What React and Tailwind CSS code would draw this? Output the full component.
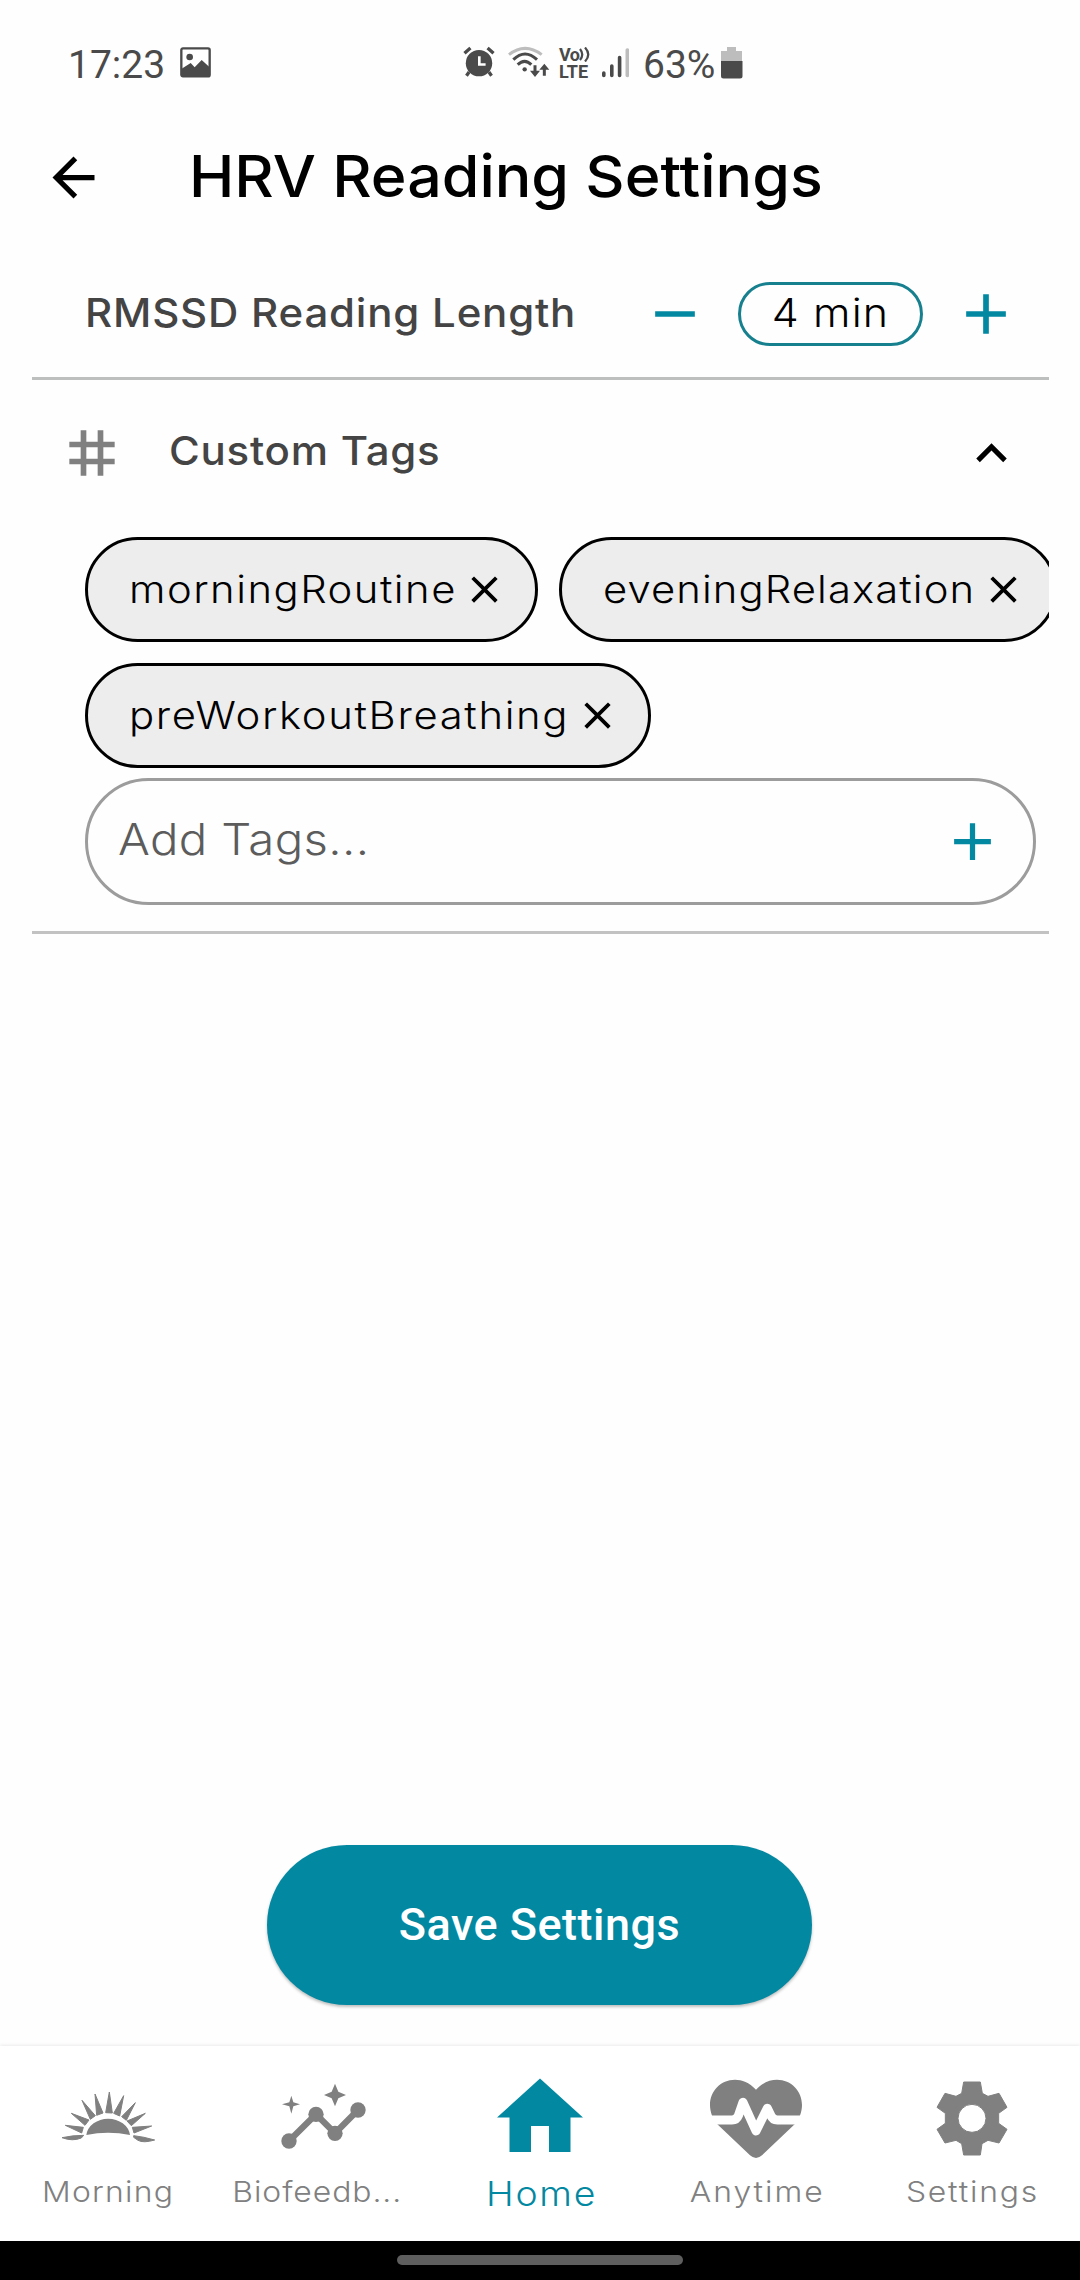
import {
  MdAdd,
  MdArrowBack,
  MdClose,
  MdExpandLess,
  MdRemove,
  MdTag,
} from "react-icons/md";

function StatusBar() {
  return (
    <div className="flex h-[128px] shrink-0 items-start pt-[46px] font-['Roboto',sans-serif] text-[39px] leading-[37px] text-[#4a4a4a]">
      <span className="mt-px ml-[68px] w-[112px]">17:23</span>
      <svg className="mt-px h-[31px] w-[31px]" viewBox="0 0 93 93">
        <rect x="4" y="4" width="85" height="84" rx="5" fill="none" stroke="currentColor" strokeWidth="7" />
        <circle cx="29" cy="30" r="10" fill="currentColor" />
        <path d="M5 65 32 48 44 61 65 39 89 61V88H5Z" fill="currentColor" />
      </svg>

      <svg className="ml-[252px] h-[33px] w-[32px]" viewBox="24 31 96 100">
        <circle cx="72" cy="83" r="40" fill="currentColor" />
        <path d="M28 53 46 37M98 37 116 53M42 110 34 121M102 110 110 121" stroke="currentColor" strokeWidth="10" fill="none" />
        <path d="M73 62V87H92" stroke="#fff" strokeWidth="8" fill="none" />
      </svg>
      <svg className="ml-[13px] h-[34px] w-[42px]" viewBox="159 30 126 102" fill="none" strokeWidth="9">
        <path d="M162 56Q210 18 260 56" stroke="#bdbdbd" />
        <path d="M175 71Q210 37 246 71M188 86Q209 66 229 86" stroke="currentColor" />
        <circle cx="209" cy="100" r="6.5" fill="currentColor" />
        <path d="M240 88V113M268 119V93" stroke="currentColor" />
        <path d="M225 104H255L240 123ZM253 101H283L268 83Z" fill="currentColor" />
      </svg>
      <span className="ml-[9px] flex w-[43px] flex-col text-[18px] leading-[17px] font-bold">
        <span className="flex items-start">
          <span className="w-[20px] tracking-[-0.5px]">Vo</span>
          <svg className="mt-px h-[15px] w-[12px]" viewBox="0 0 12 15" fill="none" stroke="currentColor" strokeWidth="2.2">
            <path d="M1 2Q5.5 7.500 1 13M6 0.500Q12.500 7.500 6 14.500" />
          </svg>
        </span>
        <span>LTE</span>
      </span>
      <svg className="mt-[2px] h-[30px] w-[27px]" viewBox="0 0 27 30" strokeWidth="3.6" strokeLinecap="round">
        <path d="M1.800 25V27.500M9.800 18V27.500M17.600 9.500V27.500" stroke="currentColor" />
        <path d="M25.300 2V27.500" stroke="#bdbdbd" />
      </svg>
      <span className="mt-px ml-[14px] w-[78px]">63%</span>
      <svg className="h-[33px] w-[22px]" viewBox="0 0 22 33">
        <path d="M6 1h9v4h6v10H0V5h6Z" fill="#bdbdbd" />
        <path d="M0 15H21.500V30a2.500 2.500 0 0 1-2.500 2.500H2.500A2.500 2.500 0 0 1 0 30Z" fill="currentColor" />
      </svg>
    </div>
  );
}

function Tag({ name, width, tracking }) {
  return (
    <div
      className={`flex h-[105px] shrink-0 items-center justify-between rounded-full border-[3px] border-black bg-[#ededed] pr-[28px] pl-[41px] ${width}`}
    >
      <span className={`origin-left scale-x-110 text-[38px] font-light whitespace-nowrap ${tracking}`}>{name}</span>
      <MdClose className="size-[45px] shrink-0" />
    </div>
  );
}

function SunIcon() {
  return (
    <svg className="h-[62px] w-[104px]" viewBox="0 0 312 186" fill="currentColor">
      <path d="M91 147A66 56 0 0 1 222 147Q156 134 91 147Z" />
      <g stroke="currentColor" strokeWidth="3">
        <path d="M18 155Q50 148 83 148L76 156Q50 167 18 155Z" />
        <path d="M28 118 82 124 77 141ZM46 82 99 102 87 118ZM78 43 118 89 103 100ZM117 24 141 81 122 88ZM160 18 169 81 149 80ZM203 29 191 90 173 82ZM238 50 211 103 197 92ZM268 82 226 119 213 105ZM287 120 234 141 229 124Z" />
        <path d="M233 149Q262 152 296 162Q262 172 246 163L233 154Z" />
      </g>
    </svg>
  );
}

function InsightsIcon() {
  return (
    <svg className="h-[66px] w-[86px]" viewBox="844 159 258 198" fill="currentColor">
      <path d="M868 333 949 253 1006 310 1075 240" fill="none" stroke="currentColor" strokeWidth="19" />
      <circle cx="868" cy="333" r="23" />
      <circle cx="949" cy="253" r="23" />
      <circle cx="1006" cy="310" r="23" />
      <circle cx="1075" cy="240" r="23" />
      <path d="M1006 161 1016 185 1039 195 1016 205 1006 229 996 205 973 195 996 185Z" />
      <path d="M875 197 881 217 901 223 881 229 875 251 869 229 847 223 869 217Z" />
    </svg>
  );
}

function HomeIcon() {
  return (
    <svg className="h-[75px] w-[86px]" viewBox="0 0 86 75" fill="currentColor">
      <path d="M43 .5 86 39.500H73.500V74H52V48H34V74H12.500V39.500H0Z" />
    </svg>
  );
}

function HeartIcon() {
  return (
    <svg className="h-[80px] w-[94px]" viewBox="147 148 282 240">
      <path
        d="M288 180C267 158 246 150 225 150 182 150 150 184 150 226 150 246 158 268 172 284L270 377Q288 393 306 377L404 284C418 268 426 246 426 226 426 184 394 150 351 150 330 150 309 158 288 180Z"
        fill="currentColor"
      />
      <path
        d="M140 271H216Q230 271 235 258L249 218 288 304 322 236 333 258Q338 271 352 271H436"
        fill="none"
        stroke="#fff"
        strokeWidth="27"
        strokeLinejoin="round"
      />
    </svg>
  );
}

function GearIcon() {
  return (
    <svg className="h-[75px] w-[72px]" viewBox="828 152 216 225">
      <path
        fillRule="evenodd"
        fill="currentColor"
        stroke="currentColor"
        strokeWidth="3"
        strokeLinejoin="round"
        d="M911 155H961L967 189 984 198 1017 189 1041 231 1016 249V279L1041 297 1017 338 984 330 966 340 961 374H911L905 340 888 330 855 338 831 297 856 279V249L831 231 855 189 888 198 905 189ZM936 222a42 42 0 1 0 0 84a42 42 0 1 0 0-84Z"
      />
    </svg>
  );
}

function NavItem({ icon, label, className = "text-[#808080]", labelClass }) {
  return (
    <div className={`flex flex-1 flex-col items-center ${className}`}>
      <div className="flex h-[120px] items-start justify-center">{icon}</div>
      <span className={`scale-x-110 leading-[52px] whitespace-nowrap ${labelClass}`}>{label}</span>
    </div>
  );
}

export default function App() {
  return (
    <div className="flex h-[2280px] w-[1080px] flex-col overflow-hidden bg-[#fefefe] font-['Inter',sans-serif] text-black">
      <StatusBar />

      <header className="flex h-[98px] shrink-0 items-center pl-[42px]">
        <MdArrowBack className="size-[63px]" />
        <h1 className="mb-[2px] ml-[84px] origin-left scale-x-105 text-[58px] font-medium whitespace-nowrap">
          HRV Reading Settings
        </h1>
      </header>

      <main className="mr-[31px] ml-[32px] flex min-h-0 flex-1 flex-col overflow-hidden">
        <section className="flex h-[154px] shrink-0 items-center border-b-[3px] border-[#bdbfbe] pt-[25px] pl-[53px]">
          <div className="w-[556px] text-[40px] font-medium tracking-[0.76px] text-[#444]">
            <span className="mb-[2px] inline-block origin-left scale-x-105 whitespace-nowrap">RMSSD Reading Length</span>
          </div>
          <MdRemove className="size-[68px] shrink-0 text-[#0388a2]" />
          <div className="mx-[29px] flex h-[64px] w-[185px] shrink-0 items-center justify-center rounded-full border-[3px] border-[#17808f]">
            <span className="mb-[2px] scale-x-110 text-[39px] leading-[50px] font-light tracking-[1.07px] whitespace-nowrap">
              4 min
            </span>
          </div>
          <MdAdd className="size-[68px] shrink-0 text-[#0388a2]" />
        </section>

        <section className="flex shrink-0 flex-col border-b-[3px] border-[#c2c2c2] pb-[26px]">
          <div className="flex h-[146px] items-center">
            <MdTag className="ml-[26px] size-[68px] text-[#808080]" />
            <span className="mb-[4px] ml-[43px] origin-left scale-x-105 text-[40px] font-medium tracking-[0.71px] text-[#444]">
              Custom Tags
            </span>
            <MdExpandLess className="mr-[27px] ml-auto size-[61px]" />
          </div>

          <div className="mt-[11px] flex flex-col gap-[21px] pl-[53px]">
            <div className="flex gap-[21px]">
              <Tag name="morningRoutine" width="w-[453px]" tracking="tracking-[1.34px]" />
              <Tag name="eveningRelaxation" width="w-[498px]" tracking="tracking-[0.98px]" />
            </div>
            <Tag name="preWorkoutBreathing" width="w-[566px]" tracking="tracking-[1.5px]" />
          </div>

          <div className="mt-[10px] mr-[13px] ml-[53px] flex h-[127px] items-center justify-between rounded-full border-[3px] border-[#9c9c9c] pr-[29px] pl-[30px]">
            <span className="mb-[5px] origin-left scale-x-110 text-[43px] font-light tracking-[0.34px] text-[#5c5c5c]">
              Add Tags...
            </span>
            <MdAdd className="mb-px size-[63px] text-[#0388a2]" />
          </div>
        </section>

        <button className="mt-auto mb-[41px] ml-[235px] h-[160px] w-[545px] shrink-0 rounded-full bg-[#0388a2] font-['Roboto',sans-serif] text-[45px] font-medium tracking-[0.5px] text-white shadow-[0_2px_3px_rgba(0,0,0,0.25)]">
          Save Settings
        </button>
      </main>

      <nav className="flex h-[195px] shrink-0 bg-white shadow-[0_-1px_3px_rgba(0,0,0,0.08)]">
        <NavItem
          icon={<div className="mt-[40px]"><SunIcon /></div>}
          label="Morning"
          labelClass="text-[29px] font-light tracking-[1.1px]"
        />
        <NavItem
          icon={<div className="mt-[37px]"><InsightsIcon /></div>}
          label="Biofeedb..."
          labelClass="mr-[14px] text-[29px] font-light tracking-[0.85px]"
        />
        <NavItem
          icon={<div className="mt-[32px]"><HomeIcon /></div>}
          label="Home"
          className="text-[#0388a2]"
          labelClass="mt-[2px] ml-[4px] text-[34px] font-light tracking-[1.6px]"
        />
        <NavItem
          icon={<div className="mt-[33px]"><HeartIcon /></div>}
          label="Anytime"
          labelClass="ml-[2px] text-[29px] font-light tracking-[1.77px]"
        />
        <NavItem
          icon={<div className="mt-[35px]"><GearIcon /></div>}
          label="Settings"
          labelClass="text-[29px] font-light tracking-[1.6px]"
        />
      </nav>

      <div className="flex h-[39px] shrink-0 justify-center bg-black pt-[14px]">
        <div className="h-[10px] w-[286px] rounded-full bg-[#5e5e5e]" />
      </div>
    </div>
  );
}
